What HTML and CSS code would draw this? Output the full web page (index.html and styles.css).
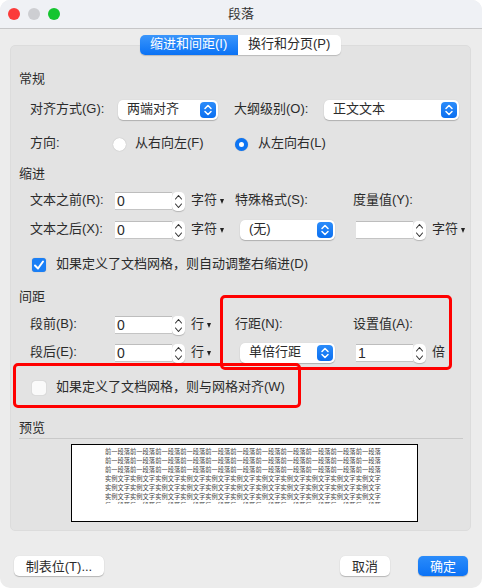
FILE: index.html
```html
<!DOCTYPE html>
<html lang="zh">
<head>
<meta charset="utf-8">
<title>段落</title>
<link rel="stylesheet" href="styles.css">
</head>
<body>
<svg class="defs" width="0" height="0">
  <symbol id="chev" viewBox="0 0 16 16"><path d="M5 6.5 8 3.5l3 3M5 9.5l3 3 3-3" fill="none" stroke="#fff" stroke-width="1.5" stroke-linecap="round" stroke-linejoin="round"/></symbol>
  <symbol id="spin" viewBox="0 0 13 19"><path d="M3.5 7 6.5 3.5 9.5 7M3.5 12l3 3.5 3-3.5" fill="none" stroke="#333" stroke-width="1.1" stroke-linecap="round" stroke-linejoin="round"/></symbol>
</svg>
<div class="window">
  <header class="titlebar">
    <div class="lights"><span class="light red"></span><span class="light grey"></span><span class="light green"></span></div>
    <div class="title">段落</div>
  </header>
  <main class="content">
    <div class="tabs">
      <div class="tab active">缩进和间距(I)</div>
      <div class="tab">换行和分页(P)</div>
    </div>
    <section class="panel">
      <h2 class="heading h-general">常规</h2>
      <div class="row r-align">
        <label class="lbl w88">对齐方式(G):</label>
        <div class="select w100"><span>两端对齐</span><svg class="sel-icon"><use href="#chev"/></svg></div>
        <label class="lbl w90 ml16">大纲级别(O):</label>
        <div class="select w135"><span>正文文本</span><svg class="sel-icon"><use href="#chev"/></svg></div>
      </div>
      <div class="row r-dir">
        <label class="lbl w83">方向:</label>
        <div class="radio-item w122"><span class="radio"></span><span class="txt">从右向左(F)</span></div>
        <div class="radio-item"><span class="radio on"></span><span class="txt">从左向右(L)</span></div>
      </div>

      <h2 class="heading h-indent">缩进</h2>
      <div class="row r-ind1">
        <div class="col-left">
          <label class="lbl w85">文本之前(R):</label>
          <div class="input">0</div><svg class="stepper"><use href="#spin"/></svg>
          <span class="unit">字符</span><span class="caret"></span>
        </div>
        <label class="lbl col-mid">特殊格式(S):</label>
        <label class="lbl">度量值(Y):</label>
      </div>
      <div class="row r-ind2">
        <div class="col-left">
          <label class="lbl w85">文本之后(X):</label>
          <div class="input">0</div><svg class="stepper"><use href="#spin"/></svg>
          <span class="unit">字符</span><span class="caret"></span>
        </div>
        <div class="col-mid pad5"><div class="select w95"><span>(无)</span><svg class="sel-icon"><use href="#chev"/></svg></div></div>
        <div class="col-right">
          <div class="input"></div><svg class="stepper"><use href="#spin"/></svg>
          <span class="unit">字符</span><span class="caret"></span>
        </div>
      </div>
      <div class="row r-check1">
        <span class="check on"><svg viewBox="0 0 14 14"><path d="M3 7.5 6 10.5 11 3.5" fill="none" stroke="#fff" stroke-width="2" stroke-linecap="round" stroke-linejoin="round"/></svg></span>
        <span class="txt">如果定义了文档网格，则自动调整右缩进(D)</span>
      </div>

      <h2 class="heading h-space">间距</h2>
      <div class="row r-sp1">
        <div class="col-left">
          <label class="lbl w85">段前(B):</label>
          <div class="input">0</div><svg class="stepper"><use href="#spin"/></svg>
          <span class="unit">行</span><span class="caret"></span>
        </div>
        <label class="lbl col-mid">行距(N):</label>
        <label class="lbl">设置值(A):</label>
      </div>
      <div class="row r-sp2">
        <div class="col-left">
          <label class="lbl w85">段后(E):</label>
          <div class="input">0</div><svg class="stepper"><use href="#spin"/></svg>
          <span class="unit">行</span><span class="caret"></span>
        </div>
        <div class="col-mid pad5"><div class="select w95"><span>单倍行距</span><svg class="sel-icon"><use href="#chev"/></svg></div></div>
        <div class="col-right">
          <div class="input">1</div><svg class="stepper"><use href="#spin"/></svg>
          <span class="unit">倍</span>
        </div>
      </div>
      <div class="row r-check2">
        <span class="check"></span>
        <span class="txt">如果定义了文档网格，则与网格对齐(W)</span>
      </div>

      <h2 class="heading h-preview">预览</h2>
      <div class="preview">
        <div class="preview-text">
          <div>前一段落前一段落前一段落前一段落前一段落前一段落前一段落前一段落前一段落前一段落前一段落</div>
          <div>前一段落前一段落前一段落前一段落前一段落前一段落前一段落前一段落前一段落前一段落前一段落</div>
          <div>前一段落前一段落前一段落前一段落前一段落前一段落前一段落前一段落前一段落前一段落前一段落</div>
          <div>实例文字实例文字实例文字实例文字实例文字实例文字实例文字实例文字实例文字实例文字实例文字</div>
          <div>实例文字实例文字实例文字实例文字实例文字实例文字实例文字实例文字实例文字实例文字实例文字</div>
          <div>实例文字实例文字实例文字实例文字实例文字实例文字实例文字实例文字实例文字实例文字实例文字</div>
          <div>后一段落后一段落后一段落后一段落后一段落后一段落后一段落后一段落后一段落后一段落后一段落</div>
        </div>
      </div>
    </section>
    <footer class="footer">
      <button class="btn w90b">制表位(T)...</button>
      <div class="spacer"></div>
      <button class="btn w50b">取消</button>
      <button class="btn w50b primary">确定</button>
    </footer>
  </main>
  <div class="mark mark-a"></div>
  <div class="mark mark-b"></div>
</div>
</body>
</html>
```

FILE: styles.css
```css
* { box-sizing: border-box; }
html, body { margin: 0; padding: 0; background: #fff; }
body { font-family: "Liberation Sans", "Noto Sans CJK SC", sans-serif; font-size: 13px; color: #2b2b2b; }
.defs { position: absolute; }
.window { position: relative; width: 482px; height: 588px; background: #ececec; border-radius: 10px; overflow: hidden; }

.titlebar { position: relative; height: 29px; background: #eff1f5; border-bottom: 1px solid #c6c6c8; display: flex; align-items: center; justify-content: center; }
.lights { position: absolute; left: 8px; top: 8px; display: flex; gap: 8px; }
.light { width: 12px; height: 12px; border-radius: 50%; }
.red { background: #fb3b3a; }
.grey { background: #cdced2; }
.green { background: #14c52f; }
.title { font-size: 13px; color: #333; padding-bottom: 4px; }

.content { padding: 6px 11px 0 10px; }
.tabs { position: relative; z-index: 1; display: flex; justify-content: center; height: 20px; margin: 0 0 -10px 0; width: 461px; }
.tab { flex: none; width: 103px; height: 20px; padding-left: 10px; line-height: 18px; background: #fff; font-size: 13px; color: #2b2b2b; border-radius: 0 5px 5px 0; box-shadow: 0 1px 1px rgba(0,0,0,.18); white-space: nowrap; }
.tab.active { width: 98px; background: linear-gradient(#3b96fb, #0a72f5); color: #fff; border-radius: 5px 0 0 5px; }

.panel { width: 461px; height: 486px; padding: 24px 8px 0; background: #e3e3e3; border: 1px solid #dcdcdc; border-radius: 5px; }
.heading { margin: 0; font-size: 13px; font-weight: normal; line-height: 18px; height: 20px; color: #2b2b2b; }
.h-indent { margin-top: 11px; }
.h-space { margin-top: 13px; }
.h-preview { margin-top: 21px; border-bottom: 1px solid #c9c9c9; margin-right: -1px; }

.row { display: flex; align-items: center; height: 20px; margin-left: 11px; white-space: nowrap; }
.r-align { margin-top: 10px; }
.r-dir { margin-top: 14px; }
.r-ind1 { margin-top: 6px; }
.r-ind2 { margin-top: 9px; }
.r-check1 { margin-top: 15px; }
.r-sp1 { margin-top: 7px; }
.r-sp2 { margin-top: 8px; }
.r-check2 { margin-top: 15px; }

.lbl, .unit, .txt, .select span { padding-bottom: 5px; }
.lbl { display: block; flex: none; }
.w83 { width: 83px; }
.w85 { width: 85px; }
.w88 { width: 88px; }
.w90 { width: 90px; }
.w95 { width: 95px; }
.w100 { width: 100px; }
.w122 { width: 122px; }
.w135 { width: 135px; }
.ml16 { margin-left: 16px; }

.col-left { display: flex; align-items: center; width: 205px; flex: none; }
.col-mid { width: 118px; flex: none; }
.pad5 { padding-left: 5px; }
.col-right { display: flex; align-items: center; padding-left: 3px; }

.select { display: flex; align-items: center; justify-content: space-between; height: 20px; padding: 0 2px 0 9px; background: #fff; border-radius: 5px; box-shadow: 0 1px 1px rgba(0,0,0,.22), 0 0 1px rgba(0,0,0,.12); flex: none; }
.sel-icon { width: 16px; height: 16px; background: linear-gradient(#2b8cfa, #0b6ff0); border-radius: 4px; display: block; }

.input { width: 57px; height: 18px; padding-left: 2px; line-height: 17px; background: #fff; border-top: 1px solid #bdbdbd; border-bottom: 1px solid #c4c4c4; flex: none; font-size: 14px; }
.stepper { width: 13px; height: 19px; background: #fff; border-radius: 5px; box-shadow: 0 1px 1px rgba(0,0,0,.2); display: block; flex: none; }
.unit { margin-left: 6px; }
.caret { margin-left: 3px; width: 0; height: 0; border-left: 2.5px solid transparent; border-right: 2.5px solid transparent; border-top: 5px solid #222; margin-top: 1px; }

.radio-item { display: flex; align-items: center; gap: 9px; }
.radio { width: 13px; height: 13px; border-radius: 50%; background: #fff; box-shadow: 0 0 1px rgba(0,0,0,.3); flex: none; }
.radio.on { background: #fff; border: 4px solid #0d75f4; margin-right: 1px; }

.check { width: 14px; height: 14px; margin: 0 10px 0 2px; border-radius: 3px; background: #fafafa; box-shadow: 0 0 1px rgba(0,0,0,.3); flex: none; display: block; }
.check.on { background: #1a7ff6; }
.check svg { display: block; width: 14px; height: 14px; }

.preview { width: 347px; height: 78px; margin: 5px 0 0 52px; background: #fff; border: 1px solid #000; padding: 2px 0 0 33px; }
.preview-text { height: 57px; overflow: hidden; font-size: 6.27px; line-height: 9px; color: #444; white-space: nowrap; }

.footer { display: flex; align-items: center; gap: 28px; height: 20px; margin: 25px 3px 0 4px; }
.spacer { flex: 1; }
.btn { height: 20px; padding: 0 0 3px; border: 0; border-radius: 5px; background: #fff; font: inherit; font-size: 13px; color: #2b2b2b; box-shadow: 0 1px 1px rgba(0,0,0,.22), 0 0 1px rgba(0,0,0,.12); }
.w90b { width: 90px; }
.w50b { width: 50px; }
.primary { background: linear-gradient(#2b8cfa, #0b72f5); color: #fff; }

.mark { position: absolute; border: 3px solid #f00; border-radius: 5px; pointer-events: none; z-index: 2; }
.mark-a { left: 220px; top: 295px; width: 232px; height: 75px; }
.mark-b { left: 13px; top: 363px; width: 288px; height: 45px; }
```
